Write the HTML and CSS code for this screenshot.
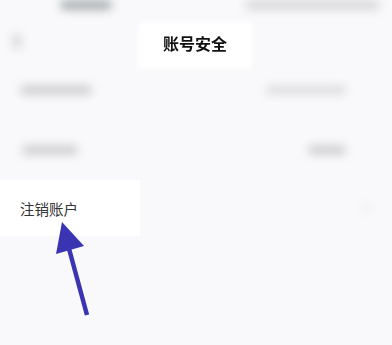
FILE: index.html
```html
<!DOCTYPE html>
<html lang="zh-CN">
<head>
  <meta charset="UTF-8" />
  <meta name="viewport" content="width=device-width, initial-scale=1.0"/>
  <title>账号安全</title>
  <link rel="stylesheet" href="styles.css">
</head>
<body>
  <div class="status">
    <span class="blob time"></span>
    <span class="blob icons"></span>
  </div>

  <div class="navbar">
    <span class="blob back"></span>
    <h1 class="title">账号安全</h1>
  </div>

  <div class="row">
    <span class="blob label-a"></span>
    <span class="blob value-a"></span>
  </div>

  <div class="row">
    <span class="blob label-b"></span>
    <span class="blob value-b"></span>
  </div>

  <div class="row row-main">
    <span class="delete">注销账户</span>
    <span class="blob chevron"></span>
  </div>

  <svg class="pointer" width="392" height="345" viewBox="0 0 392 345">
    <line x1="87" y1="315" x2="68" y2="245" stroke="#3b34b2" stroke-width="4.5"/>
    <polygon points="62,222 56,254 84,246" fill="#3b34b2"/>
  </svg>
</body>
</html>
```

FILE: styles.css
```css
body {
  margin: 0;
  background: #f9f9fb;
  font-family: "Noto Sans CJK SC", "Noto Sans", sans-serif;
  color: #222;
  position: relative;
  height: 345px;
  overflow: hidden;
}

.blob {
  display: block;
  background: #d0d0d3;
  filter: blur(5px);
  border-radius: 5px;
}

.status {
  height: 22px;
  display: flex;
  justify-content: space-between;
  align-items: flex-start;
  padding: 0 12px 0 60px;
}

.time {
  width: 52px;
  height: 10px;
  background: #a9afb1;
}

.icons {
  width: 135px;
  height: 10px;
  background: #d8d8db;
}

.navbar {
  height: 38px;
  display: flex;
  align-items: center;
  position: relative;
}

.back {
  width: 10px;
  height: 16px;
  margin-left: 12px;
  background: #dcdcdf;
}

.title {
  position: absolute;
  left: 140px;
  width: 110px;
  top: 2px;
  height: 42px;
  margin: 0;
  background: #fff;
  box-shadow: 0 0 6px 2px #fff;
  text-align: center;
  line-height: 38px;
  font-size: 16px;
  font-weight: 700;
  color: #111;
  transform: translateZ(0);
}

.row {
  height: 60px;
  display: flex;
  align-items: center;
  justify-content: space-between;
  padding: 0 20px;
}

.label-a {
  width: 72px;
  height: 10px;
}

.value-a {
  width: 80px;
  height: 8px;
  background: #dadadd;
  margin-right: 26px;
}

.label-b {
  width: 56px;
  height: 10px;
  margin-left: 2px;
}

.value-b {
  width: 38px;
  height: 10px;
  margin-right: 26px;
}

.row-main {
  height: 56px;
  background: linear-gradient(to right, #fff 140px, transparent 140px);
}

.delete {
  display: inline-block;
  font-size: 14.5px;
  color: #333;
  background: #fff;
  transform: translateZ(0);
}

.chevron {
  width: 6px;
  height: 10px;
  background: #ebebee;
  margin-right: 2px;
}

.pointer {
  position: absolute;
  left: 0;
  top: 0;
}
```
